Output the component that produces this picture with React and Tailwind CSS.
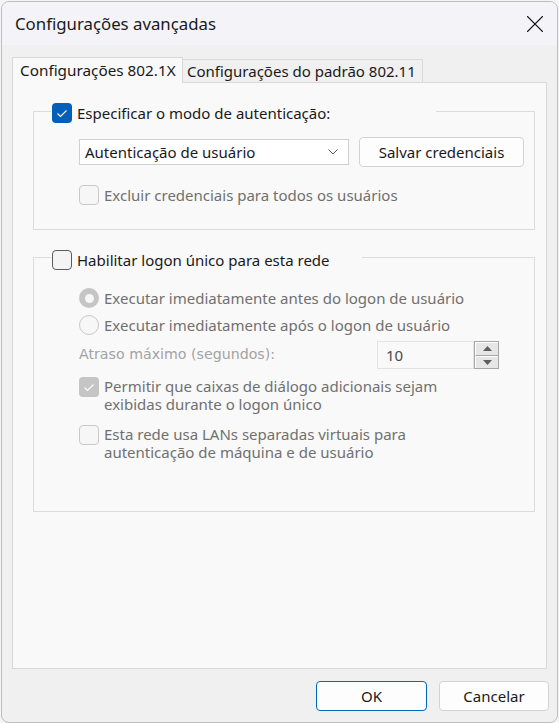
import React from 'react';
import { X } from 'lucide-react';

const ui = { fontFamily: '"Noto Sans", "Open Sans", sans-serif' };
const legacy = { fontFamily: 'Tahoma, "DejaVu Sans", "Liberation Sans", sans-serif' };

function Check({ checked, disabled }) {
  if (checked) {
    return (
      <span className={`flex items-center justify-center w-[20px] h-[20px] rounded-[4px] shrink-0 ${disabled ? 'bg-[#c5c5c5]' : 'bg-[#005fb8]'}`}>
        <svg width="20" height="20" viewBox="0 0 20 20" fill="none">
          <path d="M5.5 10.5 L8.5 13.5 L14.5 7.5" stroke="#ffffff" strokeWidth="1.1" />
        </svg>
      </span>
    );
  }
  return (
    <span className={`block w-[20px] h-[20px] rounded-[4px] shrink-0 border ${disabled ? 'border-[#c9c9c9] bg-[#f6f6f6]' : 'border-[#5c5c5c] bg-[#f4f4f4]'}`} />
  );
}

function Radio({ checked }) {
  if (checked) {
    return (
      <span className="flex items-center justify-center w-[20px] h-[20px] rounded-full bg-[#c5c5c5] shrink-0">
        <span className="block w-[9px] h-[9px] rounded-full bg-[#f7f7f7]" />
      </span>
    );
  }
  return <span className="block w-[20px] h-[20px] rounded-full border border-[#c9c9c9] bg-[#f7f7f7] shrink-0" />;
}

function GroupBox({ legendWidth, legendOffset, checked, label, height, children }) {
  return (
    <div className={`ml-[20px] w-[502px] border border-[#dcdcdc] ${height}`}>
      <div className={`flex items-center ml-[17px] pl-[1px] bg-[#f9f9f9] ${legendWidth} ${legendOffset}`}>
        <Check checked={checked} />
        <span className="ml-[5px] text-[15px] text-[#1a1a1a] leading-[20px]">{label}</span>
      </div>
      {children}
    </div>
  );
}

export default function App() {
  return (
    <div className="w-[559px] h-[723px] bg-[#f4f4f4] pl-[1px] pt-[1px]" style={ui}>
      <div className="w-[557px] h-[722px] rounded-[8px] border border-[#bdbdbd] bg-[#f0f0f0] overflow-hidden flex flex-col">
        {/* title bar */}
        <div className="h-[43px] bg-[#f3f3f8] flex items-center justify-between pl-[13px] pr-[7px] shrink-0">
          <span className="text-[16.8px] text-[#1a1a1a]">Configurações avançadas</span>
          <X size={30} strokeWidth={0.85} className="text-[#1a1a1a]" />
        </div>

        {/* tabs */}
        <div className="flex items-end h-[26px] mt-[12px] ml-[10px] -mb-[1px] relative z-10">
          <div className="h-[26px] w-[171px] border border-b-0 border-[#d9d9d9] bg-[#f9f9f9] flex items-center pl-[7px] text-[15.3px] text-[#1a1a1a]">
            Configurações 802.1X
          </div>
          <div className="h-[23px] w-[240px] mb-[1px] border-t border-r border-[#d9d9d9] bg-[#f0f0f0] flex items-center pl-[4px] text-[15px] text-[#1a1a1a]">
            Configurações do padrão 802.11
          </div>
        </div>

        {/* panel */}
        <div className="ml-[10px] w-[535px] h-[587px] border border-[#d9d9d9] bg-[#f9f9f9] pt-[28px]">
          <GroupBox legendWidth="w-[385px]" legendOffset="-mt-[9px]" checked label="Especificar o modo de autenticação:" height="h-[119px]">
            <div className="flex items-center h-[30px] mt-[14px] ml-[45px]">
              <div className="w-[270px] h-[26px] border border-[#d0d0d0] bg-white flex items-center justify-between pl-[5px] pr-[10px]">
                <span className="text-[15px] text-[#1a1a1a]">Autenticação de usuário</span>
                <svg width="10" height="6" viewBox="0 0 10 6" fill="none">
                  <path d="M0.5 0.5 L5 5 L9.5 0.5" stroke="#5a5a5a" strokeWidth="1" />
                </svg>
              </div>
              <button className="ml-[10px] w-[165px] h-[30px] rounded-[4px] border border-[#d2d2d2] bg-[#fdfdfd] text-[15px] text-[#1a1a1a]">
                Salvar credenciais
              </button>
            </div>
            <div className="flex items-center mt-[17px] ml-[45px]">
              <Check disabled />
              <span className="ml-[5px] text-[15px] text-[#707070]">Excluir credenciais para todos os usuários</span>
            </div>
          </GroupBox>

          <div className="h-[27px]" />

          <GroupBox legendWidth="w-[311px]" legendOffset="-mt-[8px]" label="Habilitar logon único para esta rede" height="h-[255px]">
            <div className="ml-[45px]">
              <div className="flex items-center h-[20px] mt-[18px]">
                <Radio checked />
                <span className="ml-[5px] text-[15px] text-[#707070]">Executar imediatamente antes do logon de usuário</span>
              </div>
              <div className="flex items-center h-[20px] mt-[7px]">
                <Radio />
                <span className="ml-[5px] text-[15px] text-[#707070]">Executar imediatamente após o logon de usuário</span>
              </div>
              <div className="flex items-center h-[28px] mt-[6px]">
                <span className="w-[298px] text-[14.2px] text-[#a3a3a3]" style={legacy}>Atraso máximo (segundos):</span>
                <div className="w-[97px] h-[28px] border border-[#e3e3e3] bg-[#f9f9f9] flex items-center pl-[8px] text-[15px] text-[#4a4a4a]">
                  10
                </div>
                <div className="w-[25px] h-[28px] border border-[#a6a6a6] bg-[#e6e6e6] flex flex-col">
                  <div className="flex-1 flex items-center justify-center border-b border-[#a6a6a6] border-t border-l border-t-white border-l-white">
                    <svg width="9" height="5" viewBox="0 0 9 5"><path d="M0 5 L4.5 0 L9 5 Z" fill="#5e5e5e" /></svg>
                  </div>
                  <div className="flex-1 flex items-center justify-center border-t border-l border-t-white border-l-white">
                    <svg width="9" height="5" viewBox="0 0 9 5"><path d="M0 0 L4.5 5 L9 0 Z" fill="#5e5e5e" /></svg>
                  </div>
                </div>
              </div>
              <div className="flex items-start mt-[8px]">
                <Check checked disabled />
                <div className="ml-[5px] text-[15px] leading-[18px] text-[#707070]">
                  <div>Permitir que caixas de diálogo adicionais sejam</div>
                  <div>exibidas durante o logon único</div>
                </div>
              </div>
              <div className="flex items-start mt-[12px]">
                <Check disabled />
                <div className="ml-[5px] text-[15px] leading-[18px] text-[#707070]">
                  <div>Esta rede usa LANs separadas virtuais para</div>
                  <div>autenticação de máquina e de usuário</div>
                </div>
              </div>
            </div>
          </GroupBox>
        </div>

        {/* buttons */}
        <div className="flex justify-end gap-[12px] mt-[12px] pr-[8px]">
          <button className="w-[111px] h-[30px] rounded-[4px] border border-[#0067c0] bg-[#fdfdfd] text-[15px] text-[#1a1a1a]">OK</button>
          <button className="w-[110px] h-[30px] rounded-[4px] border border-[#d2d2d2] bg-[#fdfdfd] text-[15px] text-[#1a1a1a]">Cancelar</button>
        </div>
      </div>
    </div>
  );
}
